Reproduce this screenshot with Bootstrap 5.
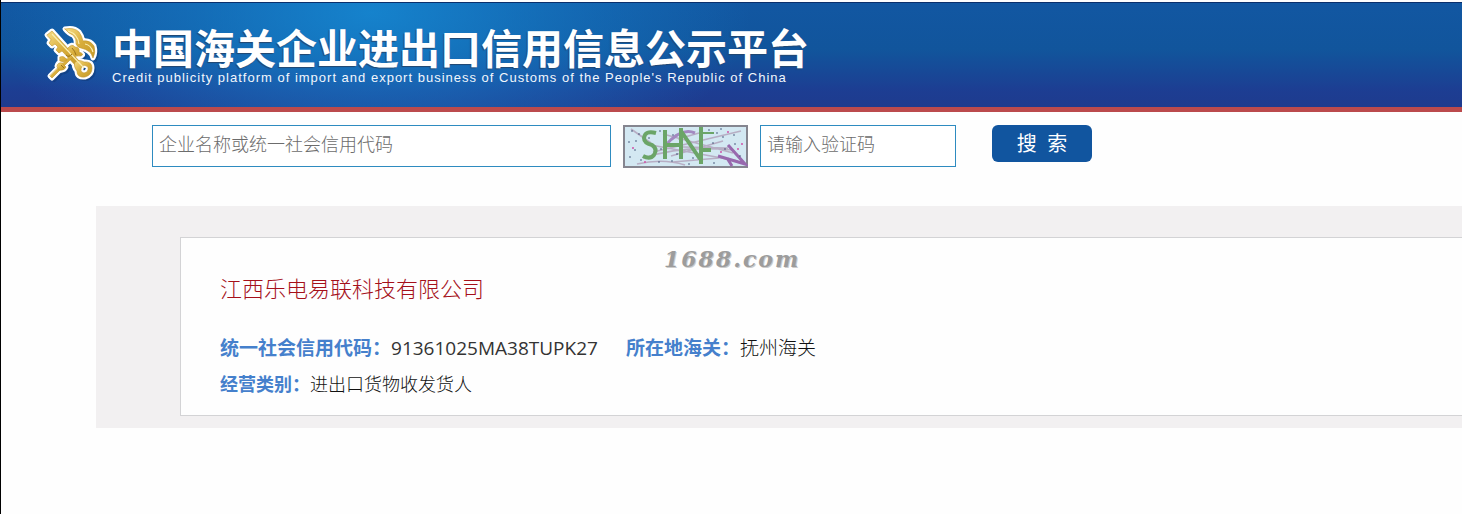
<!DOCTYPE html>
<html lang="zh-CN">
<head>
<meta charset="utf-8">
<meta name="viewport" content="width=device-width, initial-scale=1">
<title>中国海关企业进出口信用信息公示平台</title>
<link href="https://cdn.jsdelivr.net/npm/bootstrap@5.3.0/dist/css/bootstrap.min.css" rel="stylesheet">
<style>
  body {
    font-family: "Open Sans", "Noto Sans CJK SC", sans-serif;
    font-size: 18px;
    color: #2b2b2b;
    background: #fefefe;
    border-left: 1px solid #000;
    min-height: 100vh;
    padding-top: 2px;
    overflow-x: hidden;
  }
  .site-header {
    height: 110px;
    padding: 19px 16px 0 41px;
    border-top: 1px solid #0a2f6c;
    border-bottom: 5px solid #bb4a4c;
    background:
      radial-gradient(ellipse 380px 180px at 370px 10px, rgba(22, 138, 212, .85), rgba(22, 130, 205, .5) 45%, rgba(20, 110, 185, 0)),
      linear-gradient(#1257a2, #11559c 45%, #1d3d92 85%, #1e3b8e);
  }
  .site-title {
    font-family: "Noto Sans CJK SC", sans-serif;
    font-size: 41px;
    line-height: 48px;
    font-weight: 700;
    color: #fff;
    text-shadow: -1px 1px 1px #23466f;
  }
  .site-subtitle {
    font-family: "Liberation Sans", Arial, sans-serif;
    font-size: 13px;
    line-height: 16px;
    letter-spacing: 1px;
    color: #f2f7fd;
  }
  .search-bar { padding: 13px 16px 38px 151px; }
  .search-bar .form-control {
    height: 42px;
    padding: 4px 6px 8px;
    border: 1px solid #2e8bc0;
    font-size: 18px;
    font-weight: 300;
    line-height: 28px;
  }
  .form-control::placeholder { color: #6c6c6c; }
  .w-name { width: 459px; }
  .w-code { width: 196px; }
  .captcha { margin: 0 12px; }
  .btn-search {
    width: 100px;
    height: 37px;
    margin-left: 36px;
    border-radius: 6px;
    background: #11559f;
    color: #fff;
    font-size: 20px;
    line-height: 28px;
    white-space: pre;
  }
  .btn-search:hover { background: #0d4785; color: #fff; }
  .result-area { margin-left: 95px; padding: 31px 0 12px 84px; background: #f2f0f1; }
  .result-item {
    padding: 32px 39px 13px;
    border: 1px solid #d3d3d5;
    border-right: 0;
    background: #fefefe;
  }
  .company { font-size: 22px; line-height: 36px; font-weight: 300; color: #a5101a; text-decoration: none; }
  .fact-row { line-height: 36px; font-weight: 300; color: #111; }
  .fact-row dt { color: #4580cc; font-weight: 700; }
  .fact-wide { font-size: 19px; }
  .credit-code { font-weight: 400; color: #333; }
  .site-mark {
    top: 5px;
    left: 483px;
    font: italic 700 22px/32px "DejaVu Serif", serif;
    letter-spacing: 2px;
    color: #9c9c9c;
    text-shadow: 1px 1px 0 #ccc;
  }
</style>
</head>
<body>
<header class="site-header d-flex align-items-start">
  <svg class="flex-shrink-0" width="58" height="62" viewBox="0 -2 58 62" aria-label="海关关徽" role="img">
    <defs>
      <linearGradient id="gold" x1="0" y1="0" x2="1" y2="1">
        <stop offset="0" stop-color="#f6dc84"/><stop offset=".5" stop-color="#d9ae3c"/><stop offset="1" stop-color="#c59a28"/>
      </linearGradient>
      <g id="emblem" stroke-linejoin="round" stroke-linecap="round">
        <path d="M5 11 L10 7 L38 38 L34 42 L20 27 L17 29 L14 26 L16 23 L13 20 L10 22 L7 19 L9 16 Z"/>
        <path fill-rule="evenodd" d="M33 38 Q37 35 42 38 Q50 37 50 44 Q50 51 43 53 Q35 54 35 47 Q31 42 33 38 Z M40 42 Q37 48 42 49 Q47 48 46 43 Q43 40 40 42 Z"/>
        <path d="M23 5 Q32 3 37 8 Q40 12 41 17 Q48 16 52 22 Q54 28 51 34 Q49 26 39 24 Q36 24 34 20 Q35 15 31 11 Q27 10 23 5 Z"/>
        <path d="M35 25 L37 27 L10 54 L8 52 Z"/>
        <path d="M15 42 Q16 38 20 39 L24 43 Q22 47 17 46 Z"/>
        <path d="M26 24 Q30 19 33 23 Q38 23 37 28 Q43 30 39 32 Q34 31 32 34 L29 32 Q30 28 26 28 Z M18 33 Q22 31 25 36 Q22 39 18 37 Z"/>
      </g>
    </defs>
    <use href="#emblem" x="2" y="2" fill="#0b2e63" stroke="#0b2e63" stroke-width="4" opacity=".35"/>
    <use href="#emblem" fill="#fff" stroke="#fff" stroke-width="5"/>
    <use href="#emblem" fill="url(#gold)" stroke="#c3962c" stroke-width=".6"/>
    <path d="M10 10 L42 44 M26 7 Q36 10 37 20 M43 20 Q49 21 51 28" fill="none" stroke="#fbeeb0" stroke-width="1.2"/>
    <path d="M24 31 Q27 34 30 30 M30 24 Q33 27 34 31 M19 41 L22 44" fill="none" stroke="#9b741a" stroke-width="1"/>
  </svg>
  <div class="ms-2 ps-1 text-nowrap">
    <h1 class="site-title m-0">中国海关企业进出口信用信息公示平台</h1>
    <p class="site-subtitle m-0">Credit publicity platform of import and export business of Customs of the People's Republic of China</p>
  </div>
</header>

<main>
  <form class="search-bar d-flex flex-wrap align-items-start" onsubmit="return false">
    <input class="form-control w-name rounded-0" type="text" aria-label="企业名称或统一社会信用代码" placeholder="企业名称或统一社会信用代码">
    <svg class="captcha" width="125" height="43" viewBox="0 0 125 43" role="img" aria-label="验证码">
      <rect x="1" y="1" width="123" height="41" fill="#d3e8f2" stroke="#85858f" stroke-width="2"/>
      <g fill="none" stroke="#b3a5bd" stroke-width="1.6" opacity=".85">
        <path d="M8 4 L28 18 M40 9 L110 28 M30 27 L118 6 M20 33 Q60 20 110 25 M14 39 Q40 33 62 40 M28 20 L115 36 M50 37 L96 33 M55 14 L76 8 M48 31 L100 16 M60 22 L105 23"/>
        <path d="M42 21 Q58 2 72 8" stroke="#9b79b8" stroke-width="3"/>
      </g>
      <g fill="none" stroke="#6ba567" stroke-width="4">
        <path d="M33 8 Q22 5 21 13 Q21 18 29 20 Q35 24 31 30 Q27 35 20 31"/>
        <path d="M42 5 V34 M42 20 H58 M58 3 V34 M58 6 L77 34 M78 2 V39 M78 25 H88"/>
        <path d="M78 8 H91" stroke-width="2"/>
      </g>
      <path d="M105 20 L122 39 L95 31 M109 41 L104 33" fill="none" stroke="#9869ae" stroke-width="3"/>
      <path d="M9 6h0M16 9h0M6 17h0M12 25h0M7 32h0M18 35h0M37 6h0M38 24h0M36 37h0M50 10h0M49 36h0M66 39h0M70 33h0M86 5h0M94 8h0M98 4h0M91 38h0M100 12h0M111 10h0M102 24h0M112 19h0M90 18h0M117 31h0M13 16h0M26 13h0M54 29h0" stroke="#36486e" stroke-width="1.6" stroke-linecap="round"/>
      <path d="M10 23h0M22 37h0M105 7h0M119 19h0M98 27h0M115 24h0" stroke="#d052a8" stroke-width="2" stroke-linecap="round"/>
    </svg>
    <input class="form-control w-code rounded-0" type="text" aria-label="请输入验证码" placeholder="请输入验证码">
    <button class="btn btn-search border-0 p-0" type="submit">搜  索</button>
  </form>

  <section class="result-area">
    <article class="result-item position-relative">
      <span class="site-mark position-absolute">1688.com</span>
      <h2 class="m-0 d-flex"><a class="company" href="#">江西乐电易联科技有限公司</a></h2>
      <dl class="mb-0 mt-4">
        <div class="fact-row fact-wide d-flex flex-wrap">
          <dt>统一社会信用代码：</dt><dd class="credit-code mb-0 me-4 pe-1">91361025MA38TUPK27</dd>
          <dt>所在地海关：</dt><dd class="mb-0">抚州海关</dd>
        </div>
        <div class="fact-row d-flex flex-wrap">
          <dt>经营类别：</dt><dd class="mb-0">进出口货物收发货人</dd>
        </div>
      </dl>
    </article>
  </section>
</main>
<script src="https://cdn.jsdelivr.net/npm/bootstrap@5.3.0/dist/js/bootstrap.bundle.min.js"></script>
</body>
</html>
